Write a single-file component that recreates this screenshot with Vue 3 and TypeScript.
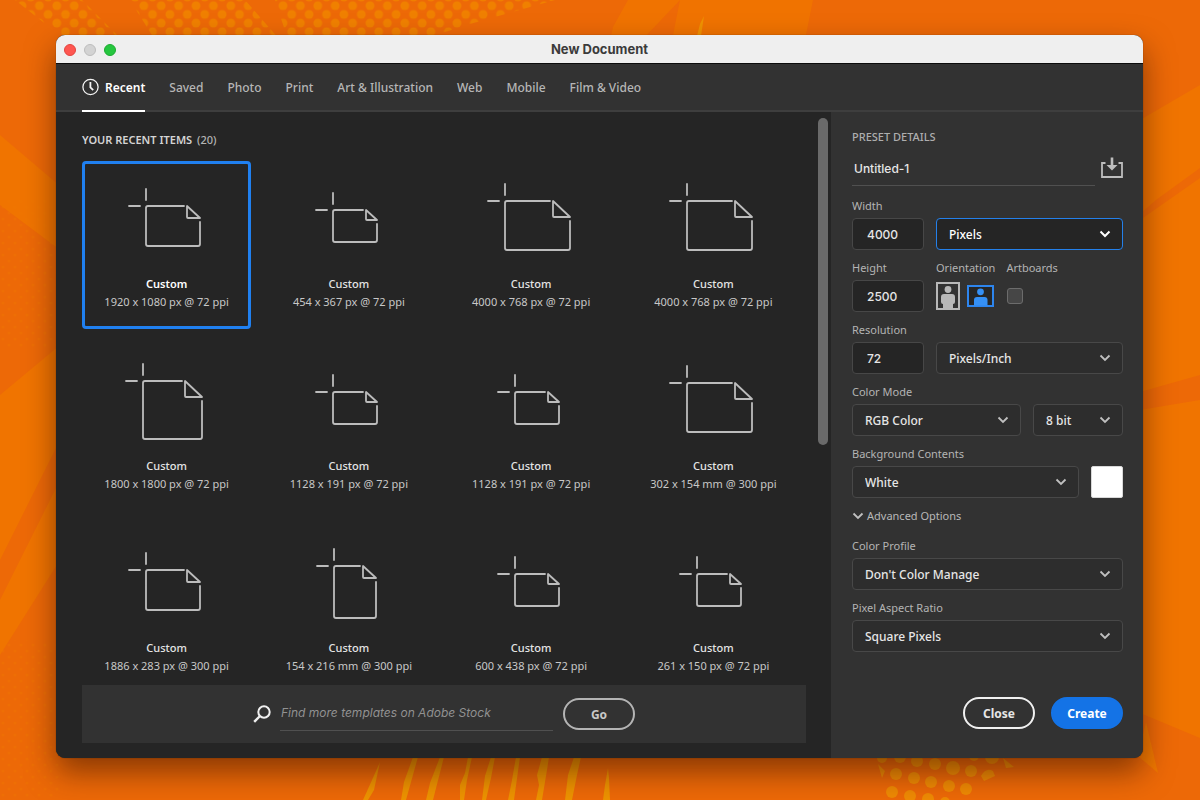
<script setup lang="ts">
import { ref } from 'vue'

interface RecentItem {
  size: string
  w: number
  h: number
  fold: number
}

const tabs: string[] = ['Recent', 'Saved', 'Photo', 'Print', 'Art & Illustration', 'Web', 'Mobile', 'Film & Video']
const activeTab = ref('Recent')

const items: RecentItem[] = [
  { size: '1920 x 1080 px @ 72 ppi', w: 54, h: 40, fold: 13 },
  { size: '454 x 367 px @ 72 ppi', w: 44, h: 32, fold: 11 },
  { size: '4000 x 768 px @ 72 ppi', w: 65, h: 49, fold: 17 },
  { size: '4000 x 768 px @ 72 ppi', w: 65, h: 49, fold: 17 },
  { size: '1800 x 1800 px @ 72 ppi', w: 59, h: 58, fold: 17 },
  { size: '1128 x 191 px @ 72 ppi', w: 44, h: 32, fold: 11 },
  { size: '1128 x 191 px @ 72 ppi', w: 44, h: 32, fold: 11 },
  { size: '302 x 154 mm @ 300 ppi', w: 65, h: 49, fold: 17 },
  { size: '1886 x 283 px @ 300 ppi', w: 54, h: 40, fold: 13 },
  { size: '154 x 216 mm @ 300 ppi', w: 42, h: 52, fold: 13 },
  { size: '600 x 438 px @ 72 ppi', w: 44, h: 32, fold: 11 },
  { size: '261 x 150 px @ 72 ppi', w: 44, h: 32, fold: 11 },
]
const selected = ref(0)

const name = ref('Untitled-1')
const width = ref('4000')
const height = ref('2500')
const resolution = ref('72')
const orientation = ref('landscape')
const artboards = ref(false)
const search = ref('')

// The page outline starts 18px in from the crop marks and leaves a gap round the folded corner.
function pagePath(i: RecentItem): string {
  const r = 18 + i.w
  const b = 18 + i.h
  return `M${r - i.fold - 3} 18H20Q18 18 18 20V${b - 2}Q18 ${b} 20 ${b}H${r - 2}Q${r} ${b} ${r} ${b - 2}V${18 + i.fold + 3}`
}
function foldPath(i: RecentItem): string {
  const r = 18 + i.w
  const x = r - i.fold
  return `M${x} 18V${16 + i.fold}Q${x} ${17 + i.fold} ${x + 1} ${17 + i.fold}H${r}Z`
}
</script>

<template>
  <div class="desktop">
    <svg class="wallpaper" viewBox="0 0 1200 800" preserveAspectRatio="xMidYMid slice" aria-hidden="true">
      <defs>
        <pattern id="dots" width="17.4" height="17.4" patternUnits="userSpaceOnUse" x="13.3" y="-3">
          <circle cx="8.7" cy="8.7" r="4.4" fill="#f08000" />
          <circle cx="0" cy="0" r="4.4" fill="#f08000" />
          <circle cx="17.4" cy="0" r="4.4" fill="#f08000" />
          <circle cx="0" cy="17.4" r="4.4" fill="#f08000" />
          <circle cx="17.4" cy="17.4" r="4.4" fill="#f08000" />
        </pattern>
        <pattern id="specks" width="12" height="12" patternUnits="userSpaceOnUse">
          <circle cx="3" cy="3" r="1.6" fill="#f07800" />
          <circle cx="9" cy="9" r="1.6" fill="#f07800" />
        </pattern>
      </defs>
      <rect width="1200" height="800" fill="#ed6907" />
      <path d="M15 0H82L122 40H66ZM130 0H245L280 40H155ZM275 0H555L470 24L420 40H288Z" fill="url(#dots)" />
      <path d="M628 0H680L642 40H610L613 27ZM680 0H813L805 40H672Z" fill="#f07300" />
      <path d="M704 16L701 36H697L700 24Z" fill="#f09200" />
      <path d="M0 135L60 186V250L0 205ZM0 395L60 345V440L0 560ZM0 600L60 480V560L0 655Z" fill="#f07400" />
      <rect y="640" width="60" height="160" fill="url(#specks)" opacity="0.3" />
      <rect y="200" width="60" height="150" fill="url(#specks)" opacity="0.3" />
      <path d="M1200 85L1140 120V713L1200 738Z" fill="#f07400" />
      <path d="M1200 168L1156 200L1140 214V220L1200 178ZM1200 375L1140 392V410L1200 400Z" fill="#ed6907" />
      <path d="M1146 722L1158 773L1138 756Z" fill="#f07800" />
      <path
        d="M380 762L372 780L363 800H368L374 790ZM413 757L404 782L401 800H406L418 757ZM440 757L430 783L426 800H433L444 757ZM468 757L465 773L460 785V800H464L467 780L472 757ZM491 757L485 776L482 800H486L491 778L495 757ZM516 757L512 780L508 800H514L520 757ZM542 757L537 775L539 785L536 800H542L547 770L549 757ZM574 757L568 775L565 800H572L577 775L581 757ZM608 768L605 785L603 800H610L609 778Z"
        fill="#ee9300"
      />
      <g fill="#ef8a04">
        <circle cx="882" cy="758" r="5" /><circle cx="900" cy="757" r="6" /><circle cx="917" cy="761" r="6" />
        <circle cx="935" cy="764" r="6" /><circle cx="953" cy="768" r="7" /><circle cx="971" cy="771" r="6" />
        <circle cx="974" cy="756" r="5" /><circle cx="992" cy="757" r="7" /><circle cx="896" cy="774" r="6" />
        <circle cx="914" cy="778" r="6" /><circle cx="931" cy="782" r="6" /><circle cx="949" cy="786" r="6" />
        <circle cx="966" cy="789" r="6" /><circle cx="892" cy="792" r="6" /><circle cx="910" cy="796" r="6" />
        <circle cx="928" cy="799" r="6" /><circle cx="945" cy="802" r="5" />
        <path d="M878 764L885 771L882 778ZM981 776Q986 767 993 771L995 776L984 781ZM1003 758L1014 767L1006 768Z" />
      </g>
    </svg>

    <main class="window">
      <header class="titlebar">
        <div class="lights">
          <button class="light red" aria-label="Close window"></button>
          <button class="light grey" aria-label="Minimize window"></button>
          <button class="light green" aria-label="Zoom window"></button>
        </div>
        <h1>New Document</h1>
      </header>

      <nav class="tabs">
        <button v-for="t in tabs" :key="t" class="tab" :class="{ active: activeTab === t }" @click="activeTab = t">
          <svg v-if="t === 'Recent'" width="17" height="18" viewBox="0 0 17 18" fill="none" stroke="#f2f2f2">
            <circle cx="8.5" cy="9" r="7.6" stroke-width="1.3" />
            <path d="M8.4 4V9.4L11.2 12.2" stroke-width="1.8" />
          </svg>
          {{ t }}
        </button>
      </nav>

      <div class="body">
        <section class="browser">
          <h2>YOUR RECENT ITEMS <span>(20)</span></h2>
          <div class="scroller">
            <div class="grid">
              <button
                v-for="(item, i) in items"
                :key="i"
                class="card"
                :class="{ selected: selected === i }"
                @click="selected = i"
              >
                <span class="art" :class="{ tall: item.h > 50 }">
                  <svg :width="item.w + 24" :height="item.h + 19" fill="none" stroke="#bcbcbc" stroke-width="1.8" stroke-linecap="round" stroke-linejoin="round">
                    <path d="M18 1V12M1 18H12" />
                    <path :d="pagePath(item)" />
                    <path :d="foldPath(item)" />
                  </svg>
                </span>
                <span class="name">Custom</span>
                <span class="size">{{ item.size }}</span>
              </button>
            </div>
          </div>
          <div class="thumb"></div>
          <form class="stock" @submit.prevent>
            <label for="stock" aria-label="Search Adobe Stock">
              <svg width="18" height="18" viewBox="0 0 18 18" fill="none" stroke="#f0f0f0">
                <circle cx="11" cy="7" r="5.7" stroke-width="2" />
                <path d="M7 11L1.2 16.8" stroke-width="2.4" />
              </svg>
            </label>
            <input id="stock" v-model="search" type="text" placeholder="Find more templates on Adobe Stock" />
            <button class="pill">Go</button>
          </form>
        </section>

        <aside class="details">
          <h2>PRESET DETAILS</h2>
          <div class="name-row">
            <input v-model="name" type="text" aria-label="Document name" />
            <button class="icon-btn" aria-label="Save preset">
              <svg width="22" height="22" viewBox="0 0 22 22" fill="none" stroke="#bdbdbd">
                <path d="M4.5 6H1V20H21V6H17.5" stroke-width="1.8" />
                <path d="M11 0.5V9" stroke-width="2.6" />
                <path d="M5.5 8H16.5L11 13.6Z" fill="#bdbdbd" stroke="none" />
              </svg>
            </button>
          </div>

          <div class="row unit">
            <div class="field">
              <label for="w">Width</label>
              <input id="w" v-model="width" type="text" class="num" />
            </div>
            <div class="select focus">
              <select aria-label="Width unit"><option>Pixels</option></select>
              <svg viewBox="0 0 12 8"><path d="M1.5 1.5L6 6L10.5 1.5" /></svg>
            </div>
          </div>

          <div class="row unit">
            <div class="field">
              <label for="h">Height</label>
              <input id="h" v-model="height" type="text" class="num" />
            </div>
            <div class="extras">
              <div class="field">
                <span class="caption">Orientation</span>
                <div class="orient">
                  <button aria-label="Portrait" @click="orientation = 'portrait'">
                    <svg width="24" height="28" viewBox="0 0 24 28">
                      <rect x="1" y="1" width="22" height="26" fill="none" stroke="#b8b8b8" stroke-width="2" />
                      <circle cx="12" cy="7.5" r="3.4" fill="#b8b8b8" />
                      <path d="M5 20V15Q5 12 8 12H16Q19 12 19 15V20Q19 22 17 22V27H7V22Q5 22 5 20Z" fill="#b8b8b8" />
                    </svg>
                  </button>
                  <button aria-label="Landscape" @click="orientation = 'landscape'">
                    <svg width="27" height="22" viewBox="0 0 27 22">
                      <rect x="1" y="1" width="25" height="20" fill="#262626" stroke="#2d85ee" stroke-width="2" />
                      <circle cx="13.5" cy="6.8" r="3.4" fill="#3590f5" />
                      <path d="M7 20.5V15Q7 12 10 12H17.5Q20.5 12 20.5 15V20.5Z" fill="#3590f5" />
                    </svg>
                  </button>
                </div>
              </div>
              <div class="field">
                <label for="art">Artboards</label>
                <div class="check"><input id="art" v-model="artboards" type="checkbox" /></div>
              </div>
            </div>
          </div>

          <div class="row unit">
            <div class="field">
              <label for="res">Resolution</label>
              <input id="res" v-model="resolution" type="text" class="num" />
            </div>
            <div class="select">
              <select aria-label="Resolution unit"><option>Pixels/Inch</option></select>
              <svg viewBox="0 0 12 8"><path d="M1.5 1.5L6 6L10.5 1.5" /></svg>
            </div>
          </div>

          <div class="row mode">
            <div class="field">
              <label for="mode">Color Mode</label>
              <div class="select">
                <select id="mode"><option>RGB Color</option></select>
                <svg viewBox="0 0 12 8"><path d="M1.5 1.5L6 6L10.5 1.5" /></svg>
              </div>
            </div>
            <div class="select">
              <select aria-label="Bit depth"><option>8 bit</option></select>
              <svg viewBox="0 0 12 8"><path d="M1.5 1.5L6 6L10.5 1.5" /></svg>
            </div>
          </div>

          <div class="row back">
            <div class="field">
              <label for="bg">Background Contents</label>
              <div class="select">
                <select id="bg"><option>White</option></select>
                <svg viewBox="0 0 12 8"><path d="M1.5 1.5L6 6L10.5 1.5" /></svg>
              </div>
            </div>
            <button class="swatch" aria-label="Background color"></button>
          </div>

          <button class="advanced">
            <svg viewBox="0 0 12 8"><path d="M1.5 1.5L6 6L10.5 1.5" /></svg>
            Advanced Options
          </button>

          <div class="row">
            <div class="field">
              <label for="profile">Color Profile</label>
              <div class="select">
                <select id="profile"><option>Don't Color Manage</option></select>
                <svg viewBox="0 0 12 8"><path d="M1.5 1.5L6 6L10.5 1.5" /></svg>
              </div>
            </div>
          </div>

          <div class="row">
            <div class="field">
              <label for="ratio">Pixel Aspect Ratio</label>
              <div class="select">
                <select id="ratio"><option>Square Pixels</option></select>
                <svg viewBox="0 0 12 8"><path d="M1.5 1.5L6 6L10.5 1.5" /></svg>
              </div>
            </div>
          </div>

          <footer>
            <button class="pill light-pill">Close</button>
            <button class="pill primary">Create</button>
          </footer>
        </aside>
      </div>
    </main>
  </div>
</template>

<style>
body {
  margin: 0;
  background: #ed6907;
}
</style>

<style scoped>
* {
  box-sizing: border-box;
}
button,
input,
select {
  font-family: inherit;
  color: inherit;
  margin: 0;
}
button {
  padding: 0;
  border: 0;
  background: none;
  cursor: pointer;
}
svg {
  display: block;
}
.desktop {
  position: relative;
  display: flex;
  height: 100vh;
  min-height: 720px;
  padding: 35px 57px 42px 56px;
  overflow: hidden;
  font-family: 'Noto Sans', 'Open Sans', sans-serif;
  font-size: 12px;
  color: #c8c8c8;
}
.wallpaper {
  position: absolute;
  inset: 0;
  width: 100%;
  height: 100%;
}
.window {
  position: relative;
  flex: 1;
  min-width: 0;
  display: flex;
  flex-direction: column;
  border-radius: 9px;
  overflow: hidden;
  background: #323232;
  box-shadow: 0 0 1px rgba(0, 0, 0, 0.6), 0 14px 30px rgba(40, 10, 0, 0.5);
}
.titlebar {
  position: relative;
  display: flex;
  align-items: center;
  justify-content: center;
  height: 29px;
  background: #efefef;
  border-bottom: 1px solid #0c0c0c;
}
.titlebar h1 {
  margin: 0;
  font: 700 13px/28px Inter, 'Liberation Sans', sans-serif;
  color: #3b3b3b;
}
.lights {
  position: absolute;
  left: 8px;
  top: 9px;
  display: flex;
  gap: 8px;
}
.light {
  width: 12px;
  height: 12px;
  border-radius: 50%;
}
.red {
  background: #fe5650;
  border: 1px solid #e2443e;
}
.grey {
  background: #d3d3d3;
  border: 1px solid #bcbcbc;
}
.green {
  background: #26c63f;
  border: 1px solid #1dab31;
}
.tabs {
  display: flex;
  gap: 24px;
  height: 48px;
  padding-left: 26px;
  border-bottom: 2px solid #3e3e3e;
}
.tab {
  display: flex;
  align-items: center;
  gap: 6px;
  height: 48px;
  font-size: 12px;
  font-weight: 500;
  border-bottom: 2px solid transparent;
  color: #b6b6b6;
  white-space: nowrap;
}
.tab.active {
  color: #fff;
  font-weight: 600;
  border-color: #fff;
}
.body {
  flex: 1;
  min-height: 0;
  display: grid;
  grid-template-columns: minmax(0, 1fr) 312px;
}
.browser {
  position: relative;
  display: flex;
  flex-direction: column;
  min-height: 0;
  padding: 18px 25px 15px 26px;
  background: #252525;
}
h2 {
  margin: 0;
  font-size: 11px;
  line-height: 20px;
  font-weight: 500;
}
.browser h2 {
  font-weight: 600;
  color: #d4d4d4;
}
.browser h2 span {
  margin-left: 2px;
  font-weight: 500;
  color: #b4b4b4;
}
.scroller {
  flex: 1;
  min-height: 0;
  padding-top: 11px;
  overflow: hidden;
}
.grid {
  display: grid;
  grid-template-columns: repeat(4, 1fr);
  gap: 14px 13px;
  padding-right: 8px;
}
.card {
  display: flex;
  flex-direction: column;
  align-items: center;
  height: 168px;
  border: 3px solid transparent;
  border-radius: 4px;
}
.card.selected {
  border-color: #2080f0;
}
.art {
  display: grid;
  place-items: center;
  height: 111px;
  padding-bottom: 5px;
}
.art.tall {
  padding-bottom: 0;
}
.name,
.size {
  line-height: 18px;
  font-size: 11px;
  white-space: nowrap;
}
.name {
  font-weight: 500;
  color: #e4e4e4;
}
.selected .name {
  font-weight: 600;
  color: #fff;
}
.thumb {
  position: absolute;
  right: 3px;
  top: 6px;
  width: 10px;
  height: 327px;
  border-radius: 5px;
  background: #6a6a6a;
}
.stock {
  display: flex;
  align-items: center;
  justify-content: center;
  height: 58px;
  background: #323232;
}
.stock input {
  width: 273px;
  height: 33px;
  margin: 0 10px 0 9px;
  padding: 0 1px 2px;
  border: 0;
  border-bottom: 1px solid #505050;
  background: none;
  font: italic 12px Inter, sans-serif;
}
.stock input::placeholder {
  color: #919191;
  opacity: 1;
}
.pill {
  width: 72px;
  height: 32px;
  border: 2px solid #b4b4b4;
  border-radius: 16px;
  font-size: 12px;
  font-weight: 700;
}
.details {
  display: flex;
  flex-direction: column;
  min-height: 0;
  padding: 15px 20px 29px 21px;
}
.details h2 {
  color: #aeaeae;
}
.name-row {
  display: flex;
  justify-content: space-between;
  align-items: center;
  margin: 6px 0 12px;
}
.name-row input {
  width: 243px;
  height: 33px;
  padding: 0 2px 2px;
  border: 0;
  border-bottom: 1px solid #505050;
  background: none;
  font: 500 12px Inter, sans-serif;
  color: #e6e6e6;
}
.icon-btn {
  padding-bottom: 4px;
}
.row {
  display: grid;
  align-items: end;
  gap: 12px;
  margin-bottom: 10px;
}
.unit {
  grid-template-columns: 72px 1fr;
}
.mode {
  grid-template-columns: 169px 1fr;
}
.back {
  grid-template-columns: 1fr 32px;
}
.field {
  display: grid;
  gap: 4px;
}
.field label,
.caption {
  font-size: 11px;
  line-height: 16px;
  color: #b4b4b4;
}
.num {
  width: 100%;
  height: 32px;
  padding: 0 14px;
  border: 1px solid #474747;
  border-radius: 4px;
  background: #252525;
  font: 500 12px Inter, sans-serif;
  color: #e6e6e6;
}
.select {
  position: relative;
}
.select select {
  display: block;
  width: 100%;
  height: 32px;
  padding: 0 30px 0 12px;
  border: 1px solid #484848;
  border-radius: 4px;
  appearance: none;
  background: #2d2d2d;
  font-size: 12px;
  font-weight: 500;
  color: #e6e6e6;
}
.select svg {
  position: absolute;
  right: 12px;
  top: 12px;
}
.select svg,
.advanced svg {
  width: 12px;
  height: 8px;
  fill: none;
  stroke: #c0c0c0;
  stroke-width: 1.8;
}
.select.focus select {
  border-color: #2480ea;
  background: #252525;
  color: #fff;
}
.select.focus svg {
  stroke: #fff;
  stroke-width: 2;
}
.extras {
  display: flex;
  gap: 11px;
}
.orient,
.check {
  display: flex;
  align-items: center;
  gap: 7px;
  height: 32px;
}
.check input {
  width: 16px;
  height: 16px;
  margin-left: 1px;
  appearance: none;
  border: 1px solid #6c6c6c;
  border-radius: 3px;
  background: #464646;
}
.swatch {
  height: 32px;
  border: 1px solid #d8d8d8;
  border-radius: 2px;
  background: #fff;
}
.advanced {
  display: flex;
  align-items: center;
  gap: 3px;
  margin-bottom: 14px;
  font-size: 11px;
  line-height: 16px;
  color: #b8b8b8;
}
footer {
  display: flex;
  justify-content: flex-end;
  gap: 16px;
  margin-top: auto;
}
.light-pill {
  border-color: #f0f0f0;
  color: #e6e6e6;
}
.primary {
  border-color: #1473e6;
  background: #1473e6;
  color: #fff;
}
</style>
